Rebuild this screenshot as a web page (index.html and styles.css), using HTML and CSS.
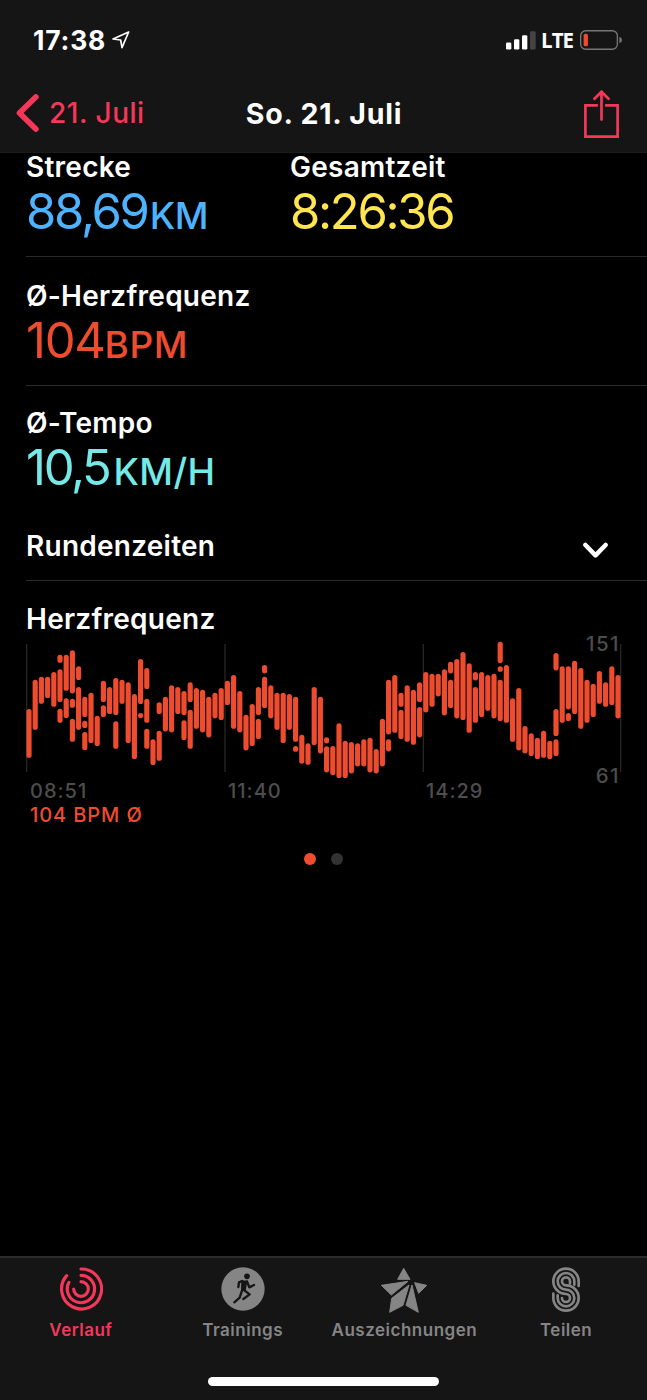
FILE: index.html
```html
<!DOCTYPE html>
<html lang="de">
<head>
    <meta charset="UTF-8">
    <meta name="viewport" content="width=device-width, initial-scale=1.0">
    <title>So. 21. Juli</title>
    <link rel="stylesheet" href="styles.css">
</head>
<body>
    <header class="header">
        <div class="status-bar">
            <span class="clock">17:38</span>
            <svg class="location" viewBox="335 92 54 54"><path d="M385 95 L338 116 L361 119 L365 142 Z"/></svg>
            <div class="status-right">
                <svg class="signal" viewBox="552 92 90 56">
                    <rect x="552" y="126" width="16" height="21" rx="4"/>
                    <rect x="576" y="116" width="16" height="31" rx="4"/>
                    <rect x="600" y="104" width="16" height="43" rx="4"/>
                    <rect class="off" x="624" y="92" width="17" height="55" rx="4"/>
                </svg>
                <span class="network">LTE</span>
                <svg class="battery" viewBox="771 90 127 60">
                    <rect class="shell" x="773" y="92" width="111" height="56" rx="15"/>
                    <rect class="charge" x="782" y="101" width="13" height="38" rx="5"/>
                    <path class="nub" d="M890 110 Q898 113 898 120 Q898 127 890 130 Z"/>
                </svg>
            </div>
        </div>
        <nav class="nav-bar">
            <a class="back">
                <svg viewBox="47 283 68 114"><path d="M106 292 L57 340 L106 388"/></svg>
                <span>21. Juli</span>
            </a>
            <h1>So. 21. Juli</h1>
            <svg class="share" viewBox="784 271 104 143"><path d="M822 317 H788 V410 H884 V317 H850 M836 359 V276 M815 297 L836 276 L857 297"/></svg>
        </nav>
    </header>

    <main class="content">
        <section class="row first">
            <div class="metric distance">
                <h2>Strecke</h2>
                <p class="value blue">88,69<small>KM</small></p>
            </div>
            <div class="metric">
                <h2>Gesamtzeit</h2>
                <p class="value yellow">8:26:36</p>
            </div>
        </section>
        <section class="row">
            <div class="metric">
                <h2>Ø-Herzfrequenz</h2>
                <p class="value red">104<small>BPM</small></p>
            </div>
        </section>
        <section class="row last">
            <div class="metric">
                <h2>Ø-Tempo</h2>
                <p class="value cyan">10,5<small>KM/H</small></p>
            </div>
        </section>
        <section class="laps">
            <h2>Rundenzeiten</h2>
            <svg class="chevron" viewBox="910 53 72 48"><path d="M917 61 L946 91 L975 61"/></svg>
        </section>
        <section class="heart">
            <h2>Herzfrequenz</h2>
            <div class="chart">
                <svg id="chart" viewBox="0 24 1788 426">
                    <path class="grid" d="M2 42 V426 M597 42 V426 M1192 42 V426 M1784 42 V426"/>
                </svg>
                <span class="max">151</span>
                <span class="min">61</span>
            </div>
            <div class="times">
                <span>08:51</span>
                <span>11:40</span>
                <span>14:29</span>
            </div>
            <p class="average">104 BPM Ø</p>
        </section>
        <div class="dots">
            <span class="dot active"></span>
            <span class="dot"></span>
        </div>
    </main>

    <footer class="tab-bar">
        <div class="tabs">
            <a class="tab active">
                <svg class="icon line" width="44" height="44" viewBox="178 67 132 132">
                    <path d="M244 73 A60 60 0 1 1 201 93"/>
                    <path d="M244 92 A41 41 0 1 1 208 113"/>
                    <path d="M244 111 A22 22 0 1 1 222 133"/>
                </svg>
                <span>Verlauf</span>
            </a>
            <a class="tab">
                <svg class="icon" width="44" height="44" viewBox="662 67 132 132">
                    <circle cx="728" cy="133" r="65"/>
                    <circle class="runner-head" cx="740" cy="95" r="8.5"/>
                    <path class="runner-body" d="M723 107 L741 108 L736 139 L722 139 Z"/>
                    <path class="runner-limbs" d="M725 109 L716 113 L714 127 M740 110 L747 128 L761 121 M732 137 L748 149 L729 163 M725 138 L718 159 L702 173"/>
                </svg>
                <span>Trainings</span>
            </a>
            <a class="tab">
                <svg class="icon star" width="48" height="46" viewBox="172 66 144 138">
                    <path d="M243 70 L262 103 L225 103 Z M176 121 L256 109 L206 150 Z M276 113 L312 121 L288 145 Z M259 120 L241 181 L201 202 L207 160 Z M268 120 L287 202 L250 181 Z"/>
                </svg>
                <span>Auszeichnungen</span>
            </a>
            <a class="tab">
                <svg class="icon line teilen" width="28" height="46" viewBox="686 65 84 138">
                    <path d="M766 122 V108 A38 38 0 1 0 728 146 A12 12 0 1 1 716 158"/>
                    <path d="M753 118 V108 A25 25 0 1 0 728 133 A25 25 0 1 1 703 158 V150"/>
                    <path d="M740 114 V108 A12 12 0 1 0 728 120 A38 38 0 1 1 690 158 V145"/>
                </svg>
                <span>Teilen</span>
            </a>
        </div>
        <div class="home-indicator"></div>
    </footer>

    <script src="chart.js"></script>
</body>
</html>
```
FILE: styles.css
```css
:root {
    --pink: #f5375a;
    --red: #ee4c2f;
    --bar: #151515;
    --gray: #858585;
    --line: #2b2b2b;
}

* {
    box-sizing: border-box;
}

body {
    margin: 0;
    height: 1400px;
    display: flex;
    flex-direction: column;
    background: #000;
    color: #fff;
    font-family: Inter, "Liberation Sans", sans-serif;
    overflow: hidden;
}

h1, h2, p {
    margin: 0;
}

svg {
    display: block;
    flex-shrink: 0;
}

.header {
    height: 153px;
    background: var(--bar);
    border-bottom: 1px solid #1c1c1c;
    flex-shrink: 0;
}

.status-bar {
    height: 80px;
    padding: 0 25px 0 33px;
    display: flex;
    align-items: center;
}

.clock {
    font-size: 26.5px;
    font-weight: 700;
    letter-spacing: 0.8px;
}

.location {
    width: 18px;
    height: 18px;
    margin-left: 6px;
    fill: none;
    stroke: #fff;
    stroke-width: 5;
    stroke-linejoin: round;
}

.status-right {
    margin-left: auto;
    display: flex;
    align-items: center;
}

.signal {
    width: 30px;
    height: 19px;
    fill: #fff;
}

.signal .off {
    fill: #444;
}

.network {
    margin: 0 7px 1px 5px;
    font: 700 20.5px "Open Sans", sans-serif;
    letter-spacing: -1px;
}

.battery {
    width: 42px;
    height: 20px;
}

.shell {
    fill: none;
    stroke: #777;
    stroke-width: 4;
}

.charge {
    fill: var(--red);
}

.nub {
    fill: #777;
}

.nav-bar {
    height: 66px;
    padding: 0 28px 0 16px;
    display: grid;
    grid-template-columns: 1fr auto 1fr;
    align-items: center;
}

.back {
    display: flex;
    align-items: center;
    gap: 10px;
    color: var(--pink);
    font-size: 28px;
    font-weight: 500;
    letter-spacing: 0.5px;
}

.back svg {
    width: 23px;
    height: 38px;
    fill: none;
    stroke: var(--pink);
    stroke-width: 17;
    stroke-linecap: round;
    stroke-linejoin: round;
}

h1 {
    margin-left: 13px;
    font-size: 28.5px;
    font-weight: 700;
    letter-spacing: 0.8px;
}

.share {
    width: 35px;
    height: 48px;
    margin-top: 2px;
    justify-self: end;
    fill: none;
    stroke: var(--pink);
    stroke-width: 8;
    stroke-linecap: round;
}

.content {
    flex: 1;
    padding-left: 26px;
}

h2 {
    font-size: 28px;
    font-weight: 600;
    line-height: 34px;
    padding-bottom: 2px;
    letter-spacing: 0.25px;
}

.row {
    display: flex;
    padding: 22px 0 18px;
    border-bottom: 1px solid var(--line);
}

.row.first {
    margin-top: -3px;
    padding: 0 0 18px;
}

.row.last {
    padding: 20px 0 0;
    border: none;
}

.distance {
    width: 264px;
}

.value {
    height: 52px;
    font-size: 49px;
    font-weight: 400;
    line-height: 52px;
    letter-spacing: -2.3px;
}

.value small {
    font-size: 37px;
    font-weight: 500;
    line-height: 1;
    letter-spacing: -0.4px;
}

.blue {
    color: #4eb3ff;
}

.blue small {
    margin-left: 2px;
}

.yellow {
    color: #ffe54f;
}

.red {
    color: var(--red);
}

.red.value {
    letter-spacing: -1.3px;
}

.red small {
    letter-spacing: 0.6px;
}

.cyan {
    color: #74e9e7;
}

.cyan small {
    margin-left: 4px;
    letter-spacing: 0.3px;
}

.laps {
    display: flex;
    align-items: center;
    justify-content: space-between;
    padding: 35px 39px 15px 0;
    border-bottom: 1px solid var(--line);
}

.chevron {
    width: 25px;
    height: 17px;
    margin-top: 6px;
    fill: none;
    stroke: #fff;
    stroke-width: 13;
    stroke-linecap: round;
    stroke-linejoin: round;
}

.heart {
    padding-top: 21px;
}

.chart {
    position: relative;
    width: 596px;
    height: 142px;
}

.chart svg {
    width: 596px;
    height: 142px;
}

.grid {
    stroke: #262626;
    stroke-width: 4;
}

.beat {
    stroke: var(--red);
    stroke-width: 15.5;
    stroke-linecap: round;
}

.max, .min {
    position: absolute;
    right: 2px;
    color: #4d4d4d;
    font-size: 20.5px;
    font-weight: 500;
    line-height: 22px;
    letter-spacing: 1.4px;
}

.max {
    top: -5px;
}

.min {
    top: 127px;
}

.times {
    display: flex;
    padding-left: 4px;
    color: #4d4d4d;
    font-size: 20px;
    font-weight: 500;
    line-height: 22px;
    letter-spacing: 1px;
}

.times span {
    width: 198px;
}

.average {
    margin-top: 2px;
    padding-left: 4px;
    color: var(--red);
    font-size: 20px;
    font-weight: 500;
    line-height: 22px;
    letter-spacing: 0.9px;
}

.dots {
    display: flex;
    justify-content: center;
    gap: 15px;
    margin-top: 27px;
    padding-right: 26px;
}

.dot {
    width: 12px;
    height: 12px;
    border-radius: 50%;
    background: #333;
}

.dot.active {
    background: var(--red);
}

.tab-bar {
    height: 144px;
    background: var(--bar);
    border-top: 2px solid #2b2b2b;
    flex-shrink: 0;
}

.tabs {
    display: flex;
    height: 119px;
    padding-top: 9px;
}

.tab {
    flex: 1 1 0;
    min-width: 0;
    display: flex;
    flex-direction: column;
    align-items: center;
    color: var(--gray);
    font-size: 17px;
    font-weight: 600;
    line-height: 22px;
    letter-spacing: 0.5px;
}

.tab.active {
    color: var(--pink);
}

.tab span {
    margin-top: auto;
    margin-bottom: 36px;
}

.icon {
    fill: currentColor;
}

.icon.line {
    fill: none;
    stroke: currentColor;
    stroke-width: 9.5;
    stroke-linecap: round;
}

.icon.teilen {
    stroke-width: 8;
}

.icon.star {
    stroke: currentColor;
    stroke-width: 3;
    stroke-linejoin: round;
}

.runner-head, .runner-body {
    fill: var(--bar);
}

.runner-limbs {
    fill: none;
    stroke: var(--bar);
    stroke-width: 7;
    stroke-linecap: round;
    stroke-linejoin: round;
}

.home-indicator {
    width: 231px;
    height: 9px;
    margin: 0 auto;
    border-radius: 5px;
    background: #fff;
}
```
FILE: chart.js
```js
// each entry is one column, as top/bottom pairs
const beats = [
    [237,383], [149,299], [140,221], [140,204], [126,230], [74,98,118,216,236,278],
    [74,182,205,264], [61,190,206,233,266,335], [109,150,171,299], [200,261,272,294,306,360],
    [188,339], [257,348], [152,216,226,261], [171,252], [144,255,274,356], [149,221],
    [157,339], [192,387], [87,222,249,264], [114,177,206,278,296,356], [328,405],
    [217,252,302,392], [200,304], [166,307], [171,252], [183,255,271,330], [157,216,239,356],
    [174,296], [179,307], [200,322], [188,265], [174,270], [152,225], [135,296], [183,307],
    [254,361], [222,348], [171,255,266,327], [105,130,140,234], [166,265], [188,299],
    [188,339], [192,299], [200,335,348,365], [314,401], [340,404], [171,345], [200,370],
    [322,340,349,427], [348,435], [280,444], [332,444], [336,430], [340,409], [328,409],
    [323,427], [357,430], [266,409], [149,313,328,364], [135,308], [188,230,239,327],
    [166,335], [179,344], [157,216,231,322], [126,247], [131,230], [131,199], [118,256],
    [95,130,149,234], [87,265], [66,270], [100,308], [126,151,171,278], [126,261],
    [135,242], [131,265], [35,99,109,125,149,273], [105,278], [205,335], [174,361],
    [288,370], [310,378], [323,387], [302,383], [332,387], [69,121,237,318,328,378],
    [109,278], [109,238,249,273], [92,252], [114,296], [149,278], [161,261], [123,221],
    [157,230], [109,225], [135,265]
];

const chart = document.getElementById("chart");

beats.forEach((column, i) => {
    for (let j = 0; j < column.length; j += 2) {
        const line = document.createElementNS("http://www.w3.org/2000/svg", "line");
        const x = 9 + i * 18.6;
        line.setAttribute("class", "beat");
        line.setAttribute("x1", x);
        line.setAttribute("x2", x);
        line.setAttribute("y1", column[j] + 7.7);
        line.setAttribute("y2", column[j + 1] - 7.6);
        chart.appendChild(line);
    }
});
```
